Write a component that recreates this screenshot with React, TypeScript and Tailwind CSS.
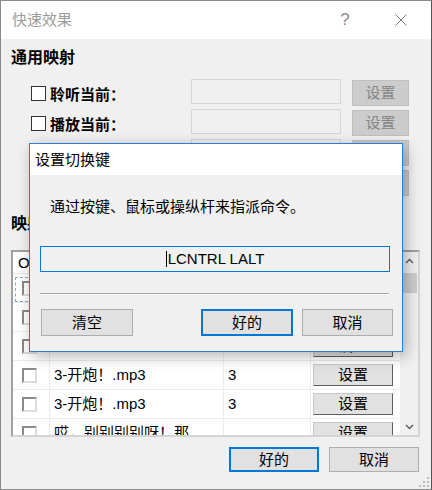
import React from "react";

function GeneralRow({ label }: { label: string }) {
  return (
    <div className="flex h-[26px] items-start">
      <div className="ml-[20px] flex w-[160px] items-start">
        <span className="mt-[7px] h-[15px] w-[15px] border border-[#333333] bg-white" />
        <span className="ml-[4px] mt-[6px] text-[15px] font-bold leading-[20px] text-black">{label}</span>
      </div>
      <div className="h-[25px] w-[150px] border border-[#d6d6d6] bg-[#f0f0f0]" />
      <div className="ml-[11px] mt-[1px] flex h-[26px] w-[57px] items-center justify-center border border-[#bfbfbf] bg-[#cccccc] text-[15px] leading-[20px] text-[#868686]">
        设置
      </div>
    </div>
  );
}

function TableRow({ name, num, focused }: { name: string; num: string; focused?: boolean }) {
  return (
    <div className="flex h-[29px] shrink-0 border-b border-[#ececec]">
      <div className="relative flex w-[37px] items-center border-r border-[#ececec] pl-[9px]">
        {focused && (
          <div className="absolute bottom-0 left-[2px] right-[1px] top-[3px] border border-dashed border-[#8aa6d2]" />
        )}
        <span className="h-[15px] w-[15px] border-2 border-b-[#dcdcdc] border-l-[#8a8a8a] border-r-[#dcdcdc] border-t-[#8a8a8a] bg-white" />
      </div>
      <div className="flex w-[174px] items-center overflow-hidden whitespace-nowrap border-r border-[#ececec] pl-[4px] text-[15px] leading-[20px] text-black">
        {name}
      </div>
      <div className="flex w-[87px] items-center border-r border-[#ececec] pl-[4px] text-[15px] leading-[20px] text-black">
        {num}
      </div>
      <div className="flex w-[89px] items-center pl-[2px]">
        <div className="flex h-[22px] w-[80px] items-center justify-center border border-b-[#5f5f5f] border-l-[#c8c8c8] border-r-[#5f5f5f] border-t-[#c8c8c8] bg-[#e1e1e1] text-[15px] leading-[20px] text-black">
          设置
        </div>
      </div>
    </div>
  );
}

export default function App() {
  const rows = [
    { name: "1-预备！.mp3", num: "1", focused: true },
    { name: "2-瞄准！.mp3", num: "2" },
    { name: "", num: "" },
    { name: "3-开炮！.mp3", num: "3" },
    { name: "3-开炮！.mp3", num: "3" },
    { name: "哎，别别别别呀！那", num: "" },
  ];

  return (
    <div className="relative h-[490px] w-[432px] overflow-hidden border border-[#8a8a8a] border-r-[#555555] bg-[#f0f0f0] font-['Liberation_Sans','Noto_Sans_CJK_SC',sans-serif] text-black">
      {/* Title bar */}
      <div className="flex h-[38px] items-center bg-white pl-[11px] pr-[24px]">
        <span className="text-[15px] leading-[20px] text-[#9b9b9b]">快速效果</span>
        <div className="ml-auto flex items-center gap-[44px]">
          <span className="w-[12px] text-center text-[17px] leading-[20px] text-[#8a8a8a]">?</span>
          <svg width="12" height="12" viewBox="0 0 12 12">
            <path d="M0.5 0.5 L11.5 11.5 M11.5 0.5 L0.5 11.5" stroke="#777777" strokeWidth="1" fill="none" />
          </svg>
        </div>
      </div>

      {/* Body */}
      <div className="pl-[10px] pr-[11px] pt-[9px]">
        <div className="h-[20px] text-[16px] font-bold leading-[20px]">通用映射</div>
        <div className="mt-[11px] flex flex-col gap-[4px]">
          <GeneralRow label="聆听当前：" />
          <GeneralRow label="播放当前：" />
          <GeneralRow label="暂停当前：" />
          <GeneralRow label="停止当前：" />
        </div>
        <div className="mt-[19px] h-[20px] text-[16px] font-bold leading-[20px]">映射</div>

        {/* Table */}
        <div className="mt-[16px] flex h-[187px] w-[409px] border-2 border-b-[#d4d4d4] border-l-[#a0a0a0] border-r-[#d4d4d4] border-t-[#a0a0a0] bg-white">
          <div className="flex w-[387px] flex-col overflow-hidden">
            <div className="flex h-[22px] shrink-0 border-b border-[#e5e5e5] text-[15px] leading-[20px]">
              <div className="flex w-[37px] items-center border-r border-[#e5e5e5] pl-[5px]">On</div>
              <div className="flex w-[174px] items-center border-r border-[#e5e5e5] pl-[4px]">文件</div>
              <div className="flex w-[87px] items-center border-r border-[#e5e5e5] pl-[4px]">次数</div>
              <div className="flex w-[89px] items-center pl-[4px]">按键</div>
            </div>
            {rows.map((r, i) => (
              <TableRow key={i} name={r.name} num={r.num} focused={r.focused} />
            ))}
          </div>
          <div className="flex w-[18px] flex-col bg-[#f0f0f0]">
            <div className="flex h-[17px] items-center justify-center">
              <svg width="9" height="6" viewBox="0 0 9 6">
                <path d="M1 5 L4.5 1.5 L8 5" stroke="#606060" strokeWidth="1.5" fill="none" />
              </svg>
            </div>
            <div className="flex-1">
              <div className="ml-[3px] mr-[1px] mt-[4px] h-[20px] bg-[#cdcdcd]" />
            </div>
            <div className="flex h-[17px] items-center justify-center">
              <svg width="9" height="6" viewBox="0 0 9 6">
                <path d="M1 1 L4.5 4.5 L8 1" stroke="#606060" strokeWidth="1.5" fill="none" />
              </svg>
            </div>
          </div>
        </div>

        {/* Bottom buttons */}
        <div className="mr-[1px] mt-[10px] flex justify-end gap-[10px]">
          <div className="flex h-[25px] w-[90px] items-center justify-center border-2 border-[#0078d7] bg-[#e1e1e1] text-[15px] leading-[20px]">
            好的
          </div>
          <div className="flex h-[25px] w-[90px] items-center justify-center border border-[#adadad] bg-[#e1e1e1] text-[15px] leading-[20px]">
            取消
          </div>
        </div>
      </div>

      {/* Resize grip */}
      <svg className="absolute bottom-[1px] right-[1px]" width="12" height="12" viewBox="0 0 12 12">
        <rect x="9" y="1" width="2" height="2" fill="#bcbcbc" />
        <rect x="5" y="5" width="2" height="2" fill="#bcbcbc" />
        <rect x="9" y="5" width="2" height="2" fill="#bcbcbc" />
        <rect x="1" y="9" width="2" height="2" fill="#bcbcbc" />
        <rect x="5" y="9" width="2" height="2" fill="#bcbcbc" />
        <rect x="9" y="9" width="2" height="2" fill="#bcbcbc" />
      </svg>

      {/* Popup dialog */}
      <div className="absolute left-[28px] top-[142px] flex h-[209px] w-[374px] flex-col border border-[#2b7fd0] bg-[#f0f0f0] shadow-[3px_4px_14px_rgba(0,0,0,0.3)]">
        <div className="flex h-[31px] items-center bg-white pl-[5px] text-[15px] leading-[20px] text-black">设置切换键</div>
        <div className="pl-[20px] pt-[22px] text-[15px] leading-[20px] text-black">通过按键、鼠标或操纵杆来指派命令。</div>
        <div className="ml-[10px] mt-[29px] flex h-[26px] w-[350px] items-center justify-center border border-[#0078d7] bg-[#f0f0f0] text-[15px] leading-[20px] text-black">
          <span className="mr-[1px] h-[16px] w-[1px] bg-black" />
          <span>LCNTRL LALT</span>
        </div>
        <div className="ml-[10px] mt-[21px] h-[2px] w-[349px] border-b border-t border-b-white border-t-[#a8a8a8]" />
        <div className="mt-[14px] flex pl-[11px]">
          <div className="flex h-[27px] w-[92px] items-center justify-center border border-[#adadad] bg-[#e1e1e1] text-[15px] leading-[20px]">
            清空
          </div>
          <div className="ml-[68px] flex h-[27px] w-[92px] items-center justify-center border-2 border-[#0078d7] bg-[#e1e1e1] text-[15px] leading-[20px]">
            好的
          </div>
          <div className="ml-[9px] flex h-[27px] w-[91px] items-center justify-center border border-[#adadad] bg-[#e1e1e1] text-[15px] leading-[20px]">
            取消
          </div>
        </div>
      </div>
    </div>
  );
}
